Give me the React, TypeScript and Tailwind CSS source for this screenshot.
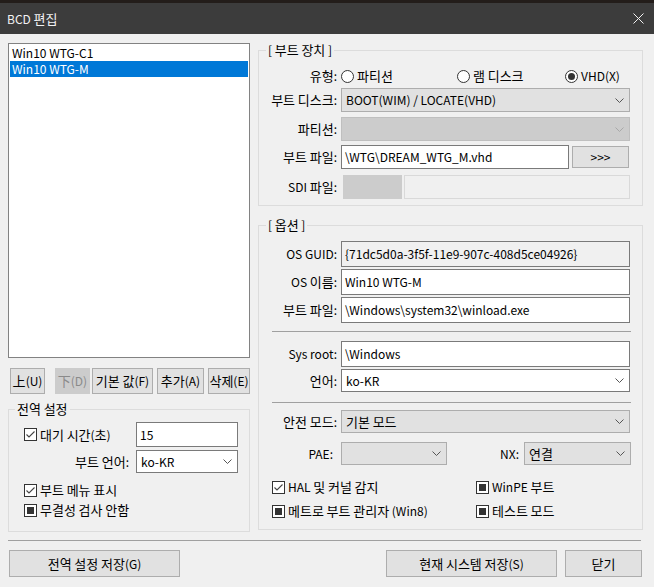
import React from "react";

type SelKind = "btn" | "edit" | "off";

const selCls: Record<SelKind, string> = {
  btn: "bg-[#e1e1e1] border-[#adadad]",
  edit: "bg-white border-[#7a7a7a]",
  off: "bg-[#cccccc] border-[#bfbfbf]",
};

// hangul runs a size up, latin stays at 12px (Malgun Gothic proportions)
const CJK = /([\uAC00-\uD7A3\u3131-\u318E\u4E00-\u9FFF]+)/;

function Tx({ t }: { t: string }) {
  return (
    <span className="whitespace-pre">
      {t.split(CJK).map((s, i) =>
        i % 2 === 1 ? (
          <span key={i} className="text-[13px]">
            {s}
          </span>
        ) : (
          s
        )
      )}
    </span>
  );
}

function Chevron({ dim }: { dim?: boolean }) {
  return (
    <svg width="9" height="5" viewBox="0 0 9 5" className="shrink-0">
      <polyline
        points="0.5,0.5 4.5,4.5 8.5,0.5"
        fill="none"
        stroke={dim ? "#a8a8a8" : "#555555"}
        strokeWidth="1"
      />
    </svg>
  );
}

function Select({ value = "", kind, className }: { value?: string; kind: SelKind; className: string }) {
  return (
    <div className={`flex items-center justify-between border pl-[4px] pr-[5px] ${selCls[kind]} ${className}`}>
      <Tx t={value} />
      <Chevron dim={kind === "off"} />
    </div>
  );
}

function Field({ value, className }: { value: string; className: string }) {
  return (
    <div className={`flex items-center border border-[#7a7a7a] pl-[3px] ${className}`}>
      <Tx t={value} />
    </div>
  );
}

function Check({ mixed, label, className = "" }: { mixed?: boolean; label: string; className?: string }) {
  return (
    <div className={`flex items-center h-[16px] ${className}`}>
      <span className="w-[13px] h-[13px] border border-[#333333] bg-white flex items-center justify-center shrink-0">
        {mixed ? (
          <span className="w-[7px] h-[7px] bg-[#333333]" />
        ) : (
          <svg width="11" height="11" viewBox="0 0 11 11">
            <polyline points="1.5,5.5 4,8 9.5,2.5" fill="none" stroke="#444444" strokeWidth="1.1" />
          </svg>
        )}
      </span>
      <span className="ml-[3px]">
        <Tx t={label} />
      </span>
    </div>
  );
}

function Radio({ on, label, className = "" }: { on?: boolean; label: string; className?: string }) {
  return (
    <div className={`flex items-center ${className}`}>
      <span className="w-[13px] h-[13px] rounded-full border border-[#333333] bg-white flex items-center justify-center shrink-0">
        {on && <span className="w-[7px] h-[7px] rounded-full bg-[#333333]" />}
      </span>
      <span className="ml-[3px]">
        <Tx t={label} />
      </span>
    </div>
  );
}

function Btn({ label, className, off }: { label: string; className: string; off?: boolean }) {
  return (
    <div
      className={`flex items-center justify-center border ${
        off ? "bg-[#cccccc] border-[#cccccc] text-[#8a8a8a]" : "bg-[#e1e1e1] border-[#adadad]"
      } ${className}`}
    >
      <Tx t={label} />
    </div>
  );
}

function Label({ text, className = "w-[78px]" }: { text: string; className?: string }) {
  return (
    <span className={`text-right shrink-0 ${className}`}>
      <Tx t={text} />
    </span>
  );
}

export default function App() {
  return (
    <div className="w-[654px] h-[587px] overflow-hidden bg-[#f0f0f0] text-[12px] leading-[16px] text-black font-['Noto_Sans_CJK_KR',sans-serif]">
      <div className="h-[3px] bg-[#231d1a]" />
      <div className="h-[31px] bg-[#3c3c3c] flex items-center justify-between pl-[7px] pr-[10px] text-[#f2f2f2]">
        <Tx t="BCD 편집" />
        <svg width="11" height="11" viewBox="0 0 11 11">
          <path d="M0.5 0.5 L10.5 10.5 M10.5 0.5 L0.5 10.5" stroke="#f2f2f2" strokeWidth="1" />
        </svg>
      </div>

      <div className="px-[8px] pt-[8px]">
        <div className="flex">
          {/* left column */}
          <div className="w-[242px] shrink-0">
            <div className="mt-[1px] h-[315px] border border-[#828282] bg-white p-[1px]">
              <div className="h-[16px] pl-[2px] flex items-center">Win10 WTG-C1</div>
              <div className="h-[16px] pl-[2px] flex items-center bg-[#0078d7] text-white">Win10 WTG-M</div>
            </div>
            <div className="flex mt-[10px] h-[26px]">
              <Btn label="上(U)" className="ml-[2px] w-[35px]" />
              <Btn label="下(D)" off className="ml-[10px] w-[35px]" />
              <Btn label="기본 값(F)" className="ml-[2px] w-[61px]" />
              <Btn label="추가(A)" className="ml-[4px] w-[47px]" />
              <Btn label="삭제(E)" className="ml-[4px] w-[42px]" />
            </div>
            <fieldset className="mt-[7px] border border-[#dcdcdc] pb-[13px]">
              <legend className="ml-[6px] px-[2px]">
                <Tx t="전역 설정" />
              </legend>
              <div className="flex items-center mt-[5px] h-[25px]">
                <Check label="대기 시간(초)" className="ml-[15px] w-[112px]" />
                <Field value="15" className="w-[102px] h-[25px] bg-white" />
              </div>
              <div className="flex items-center mt-[3px]">
                <Label text="부트 언어:" className="w-[120px]" />
                <Select value="ko-KR" kind="edit" className="ml-[7px] w-[102px] h-[23px]" />
              </div>
              <Check label="부트 메뉴 표시" className="ml-[15px] mt-[9px]" />
              <Check mixed label="무결성 검사 안함" className="ml-[15px] mt-[4px]" />
            </fieldset>
          </div>

          {/* right column */}
          <div className="ml-[8px] w-[385px] shrink-0">
            <fieldset className="border border-[#dcdcdc] pb-[6px]">
              <legend className="ml-[7px] px-[2px]">
                <Tx t="[ 부트 장치 ]" />
              </legend>
              <div className="flex items-center mt-[10px] h-[16px]">
                <Label text="유형:" />
                <div className="ml-[4px] flex">
                  <Radio label="파티션" className="w-[116px]" />
                  <Radio label="램 디스크" className="w-[108px]" />
                  <Radio on label="VHD(X)" />
                </div>
              </div>
              <div className="flex items-center mt-[4px]">
                <Label text="부트 디스크:" />
                <Select value="BOOT(WIM) / LOCATE(VHD)" kind="btn" className="ml-[4px] w-[289px] h-[24px]" />
              </div>
              <div className="flex items-center mt-[5px]">
                <Label text="파티션:" />
                <Select kind="off" className="ml-[4px] w-[289px] h-[24px]" />
              </div>
              <div className="flex items-center mt-[4px]">
                <Label text="부트 파일:" />
                <Field value="\WTG\DREAM_WTG_M.vhd" className="ml-[4px] w-[228px] h-[24px] bg-white" />
                <Btn label=">>>" className="ml-[3px] w-[57px] h-[22px]" />
              </div>
              <div className="flex items-center mt-[6px]">
                <Label text="SDI 파일:" />
                <div className="ml-[6px] w-[59px] h-[24px] bg-[#cccccc]" />
                <div className="ml-[2px] w-[226px] h-[24px] border border-[#d9d9d9] bg-[#f0f0f0]" />
              </div>
            </fieldset>

            <fieldset className="mt-[11px] border border-[#dcdcdc] pb-[10px]">
              <legend className="ml-[7px] px-[2px]">
                <Tx t="[ 옵션 ]" />
              </legend>
              <div className="flex items-center mt-[8px]">
                <Label text="OS GUID:" />
                <Field
                  value="{71dc5d0a-3f5f-11e9-907c-408d5ce04926}"
                  className="ml-[4px] w-[289px] h-[26px] bg-[#f0f0f0]"
                />
              </div>
              <div className="flex items-center mt-[2px]">
                <Label text="OS 이름:" />
                <Field value="Win10 WTG-M" className="ml-[4px] w-[289px] h-[26px] bg-white" />
              </div>
              <div className="flex items-center mt-[2px]">
                <Label text="부트 파일:" />
                <Field value="\Windows\system32\winload.exe" className="ml-[4px] w-[289px] h-[26px] bg-white" />
              </div>
              <div className="ml-[13px] mt-[8px] w-[359px] h-px bg-[#a0a0a0]" />
              <div className="flex items-center mt-[9px]">
                <Label text="Sys root:" />
                <Field value="\Windows" className="ml-[4px] w-[289px] h-[26px] bg-white" />
              </div>
              <div className="flex items-center mt-[2px]">
                <Label text="언어:" />
                <Select value="ko-KR" kind="edit" className="ml-[4px] w-[289px] h-[23px]" />
              </div>
              <div className="ml-[13px] mt-[10px] w-[359px] h-px bg-[#a0a0a0]" />
              <div className="flex items-center mt-[7px]">
                <Label text="안전 모드:" />
                <Select value="기본 모드" kind="btn" className="ml-[4px] w-[289px] h-[23px]" />
              </div>
              <div className="flex items-center mt-[9px]">
                <Label text="PAE:" className="w-[74px]" />
                <Select kind="btn" className="ml-[8px] w-[106px] h-[23px]" />
                <Label text="NX:" className="w-[72px]" />
                <Select value="연결" kind="btn" className="ml-[5px] w-[107px] h-[23px]" />
              </div>
              <div className="flex mt-[14px] ml-[13px]">
                <Check label="HAL 및 커널 감지" className="w-[204px]" />
                <Check mixed label="WinPE 부트" />
              </div>
              <div className="flex mt-[8px] ml-[13px]">
                <Check mixed label="메트로 부트 관리자 (Win8)" className="w-[204px]" />
                <Check mixed label="테스트 모드" />
              </div>
            </fieldset>
          </div>
        </div>

        <div className="mt-[8px] h-px bg-[#a0a0a0] w-[633px]" />
        <div className="flex mt-[9px] h-[27px]">
          <Btn label="전역 설정 저장(G)" className="ml-[1px] w-[171px]" />
          <Btn label="현재 시스템 저장(S)" className="ml-[206px] w-[171px]" />
          <Btn label="닫기" className="ml-[8px] w-[77px]" />
        </div>
      </div>
    </div>
  );
}
